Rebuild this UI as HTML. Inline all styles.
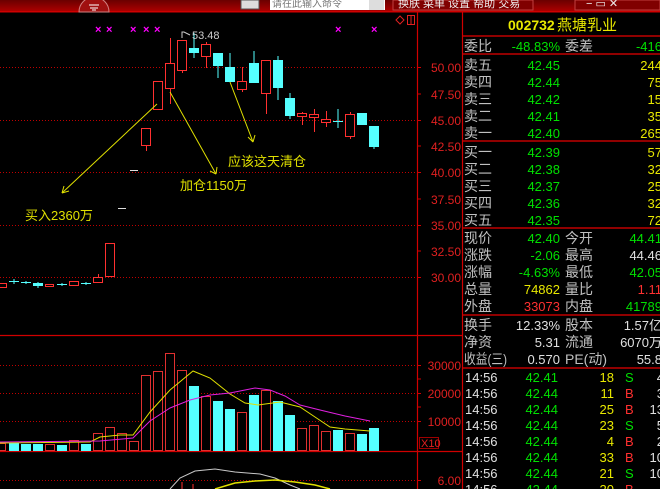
<!DOCTYPE html>
<html><head><meta charset="utf-8"><style>
html,body{margin:0;padding:0;background:#000;width:660px;height:489px;overflow:hidden}
svg{display:block}
text{font-family:"Liberation Sans","Noto Sans CJK SC",sans-serif}
.l{fill:#c0c0c0;font-size:14px}
.g{fill:#00e000;font-size:13px}
.y{fill:#e8e800;font-size:13px}
.r{fill:#ff3030;font-size:13px}
.w{fill:#e0e0e0;font-size:13px}
.ax{fill:#e02020;font-size:12px}
</style></head><body>
<svg width="660" height="489" viewBox="0 0 660 489" xmlns="http://www.w3.org/2000/svg">
<defs><linearGradient id="tb" x1="0" y1="0" x2="0" y2="1"><stop offset="0" stop-color="#6a0000"/><stop offset="1" stop-color="#b00000"/></linearGradient></defs>
<rect x="0" y="0" width="660" height="12" fill="url(#tb)"/>
<rect x="0" y="11" width="660" height="1.5" fill="#d00000"/>
<path d="M79 12 A15 15 0 0 1 109 12 Z" fill="#a01010" stroke="#d08080" stroke-width="1"/>
<path d="M89 5 h10 M90 8 h8 M92 10 h4" stroke="#fff" stroke-width="1"/>
<rect x="241" y="0" width="18" height="9" fill="#ddd" stroke="#555"/>
<rect x="270" y="0" width="115" height="10" fill="#fff"/>
<text x="272" y="7" font-size="10" fill="#777">请在此输入命令</text>
<rect x="369" y="0" width="15" height="10" fill="#ddd"/>
<rect x="393" y="0" width="140" height="10" fill="#800000" stroke="#c04040"/>
<text x="398" y="7" font-size="11" fill="#eee">换肤  菜单  设置  帮助  交易</text>
<rect x="575" y="0" width="85" height="10" fill="#800000" stroke="#c04040"/>
<text x="586" y="7" font-size="11" fill="#eee">−     ▭     ✕</text>

<g stroke="#c00000" stroke-width="1" stroke-dasharray="1,2">
<line x1="0" y1="67.5" x2="417" y2="67.5"/><line x1="0" y1="120.5" x2="417" y2="120.5"/>
<line x1="0" y1="172.5" x2="417" y2="172.5"/><line x1="0" y1="225.5" x2="417" y2="225.5"/>
<line x1="0" y1="277.5" x2="417" y2="277.5"/>
<line x1="0" y1="365.5" x2="417" y2="365.5"/><line x1="0" y1="393.5" x2="417" y2="393.5"/>
<line x1="0" y1="421.5" x2="417" y2="421.5"/><line x1="0" y1="480.5" x2="417" y2="480.5"/>
</g>
<g stroke="#d00000" stroke-width="1.2">
<line x1="417.5" y1="12" x2="417.5" y2="489"/>
<line x1="462.5" y1="12" x2="462.5" y2="489"/>
<line x1="0" y1="335.5" x2="462" y2="335.5"/>
<line x1="0" y1="451.5" x2="462" y2="451.5"/>
</g>
<g stroke="#d00000"><path d="M417 67.5h4M417 94h4M417 120.5h4M417 146h4M417 172.5h4M417 199h4M417 225.5h4M417 251h4M417 277.5h4M417 365.5h4M417 379h4M417 393.5h4M417 407h4M417 421.5h4M417 480.5h4"/></g>
<g class="ax" text-anchor="end">
<text x="461" y="72">50.00</text><text x="461" y="99">47.50</text><text x="461" y="125">45.00</text>
<text x="461" y="151">42.50</text><text x="461" y="177">40.00</text><text x="461" y="204">37.50</text>
<text x="461" y="230">35.00</text><text x="461" y="256">32.50</text><text x="461" y="282">30.00</text>
<text x="461" y="370">30000</text><text x="461" y="398">20000</text><text x="461" y="426">10000</text>
<text x="461" y="485">6.00</text>
</g>
<rect x="419.5" y="437.5" width="19" height="11" fill="none" stroke="#a00000"/>
<text x="421" y="447" font-size="11" fill="#e02020">X10</text>
<path d="M396 20 l4 -4 l4 4 l-4 4z" fill="none" stroke="#e02020"/>
<rect x="407.5" y="15.5" width="7" height="9" fill="none" stroke="#e02020"/><line x1="411" y1="16" x2="411" y2="24" stroke="#e02020"/>

<g fill="#ff00ff" font-size="11" font-weight="bold"><text x="95" y="33">×</text><text x="106" y="33">×</text><text x="130" y="33">×</text><text x="143" y="33">×</text><text x="154" y="33">×</text><text x="335" y="33">×</text><text x="371" y="33">×</text></g>

<g stroke="#ff3030" fill="#000" stroke-width="1">
<rect x="-1.5" y="283.5" width="8" height="4"/>
<rect x="45.5" y="284.5" width="8" height="2"/>
<rect x="69.5" y="281.5" width="9" height="4"/>
<line x1="98.5" y1="274" x2="98.5" y2="277"/><rect x="93.5" y="277.5" width="9" height="5"/>
<rect x="105.5" y="243.5" width="9" height="33"/>
<line x1="146.5" y1="146" x2="146.5" y2="151"/><rect x="141.5" y="128.5" width="9" height="17"/>
<rect x="153.5" y="81.5" width="9" height="28"/>
<line x1="170.5" y1="38" x2="170.5" y2="63"/><line x1="170.5" y1="88" x2="170.5" y2="104"/><rect x="165.5" y="63.5" width="9" height="25"/>
<line x1="182.5" y1="70" x2="182.5" y2="73"/><rect x="177.5" y="40.5" width="9" height="30"/>
<line x1="206.5" y1="42" x2="206.5" y2="44"/><line x1="206.5" y1="56" x2="206.5" y2="68"/><rect x="201.5" y="44.5" width="9" height="12"/>
<line x1="242.5" y1="67" x2="242.5" y2="92"/><rect x="237.5" y="81.5" width="9" height="8"/>
<line x1="266.5" y1="93" x2="266.5" y2="114"/><rect x="261.5" y="60.5" width="9" height="33"/>
<line x1="302.5" y1="112" x2="302.5" y2="125"/><rect x="297.5" y="113.5" width="9" height="3"/>
<line x1="314.5" y1="109" x2="314.5" y2="132"/><rect x="309.5" y="114.5" width="9" height="3"/>
<line x1="326.5" y1="111" x2="326.5" y2="127"/><rect x="321.5" y="119.5" width="9" height="3"/>
<line x1="350.5" y1="112" x2="350.5" y2="139"/><rect x="345.5" y="114.5" width="9" height="22"/>
</g>
<g fill="#55ffff" stroke="#55ffff" stroke-width="1">
<line x1="9" y1="281.5" x2="19" y2="281.5"/><line x1="14" y1="279" x2="14" y2="284"/>
<line x1="21" y1="282.5" x2="31" y2="282.5"/><line x1="26" y1="281" x2="26" y2="284"/>
<rect x="33.5" y="283.5" width="9" height="2"/><line x1="38" y1="282" x2="38" y2="288"/>
<line x1="57" y1="284.5" x2="67" y2="284.5"/><line x1="62" y1="283" x2="62" y2="286"/>
<line x1="81" y1="283.5" x2="91" y2="283.5"/><line x1="86" y1="282" x2="86" y2="285"/>
<line x1="194" y1="33" x2="194" y2="58"/><rect x="189.5" y="48.5" width="9" height="4"/>
<line x1="218" y1="65" x2="218" y2="78"/><rect x="213.5" y="53.5" width="9" height="12"/>
<line x1="230" y1="53" x2="230" y2="67"/><rect x="225.5" y="67.5" width="9" height="14"/>
<line x1="254" y1="51" x2="254" y2="63"/><rect x="249.5" y="63.5" width="9" height="19"/>
<line x1="278" y1="56" x2="278" y2="100"/><rect x="273.5" y="60.5" width="9" height="27"/>
<line x1="290" y1="93" x2="290" y2="119"/><rect x="285.5" y="98.5" width="9" height="17"/>
<line x1="338" y1="109" x2="338" y2="128"/><line x1="333" y1="121.5" x2="343" y2="121.5"/>
<rect x="357.5" y="113.5" width="9" height="11"/>
<line x1="374" y1="146" x2="374" y2="149"/><rect x="369.5" y="126.5" width="9" height="20"/>
</g>
<g stroke="#ddd"><line x1="118" y1="208.5" x2="126" y2="208.5"/><line x1="130" y1="170.5" x2="138" y2="170.5"/></g>
<path d="M182 38 v-6 h2 l6 3" fill="none" stroke="#ccc"/>
<text x="192" y="39" font-size="11" fill="#ccc">53.48</text>

<g stroke="#e0e000" stroke-width="1" fill="none">
<line x1="157" y1="104" x2="62" y2="193"/><path d="M62 193 l2 -7 M62 193 l7 -2"/>
<line x1="170" y1="92" x2="216" y2="174"/><path d="M216 174 l-6 -3 M216 174 l1 -7"/>
<line x1="230" y1="82" x2="253" y2="142"/><path d="M253 142 l-5 -5 M253 142 l2 -7"/>
</g>
<g fill="#e0e000" font-size="13">
<text x="228" y="166">应该这天清仓</text>
<text x="180" y="190">加仓1150万</text>
<text x="25" y="220">买入2360万</text>
</g>

<g fill="#000" stroke="#e03030">
<rect x="-1.5" y="443.5" width="7" height="7"/><rect x="45.5" y="444.5" width="9" height="6"/>
<rect x="69.5" y="440.5" width="9" height="10"/><rect x="93.5" y="433.5" width="9" height="17"/>
<rect x="105.5" y="427.5" width="9" height="23"/><rect x="117.5" y="433.5" width="9" height="17"/>
<rect x="129.5" y="441.5" width="9" height="9"/><rect x="141.5" y="375.5" width="9" height="75"/>
<rect x="153.5" y="371.5" width="9" height="79"/><rect x="165.5" y="353.5" width="9" height="97"/>
<rect x="177.5" y="370.5" width="9" height="80"/><rect x="201.5" y="396.5" width="9" height="54"/>
<rect x="237.5" y="412.5" width="9" height="38"/><rect x="261.5" y="390.5" width="9" height="60"/>
<rect x="297.5" y="428.5" width="9" height="22"/><rect x="309.5" y="425.5" width="9" height="25"/>
<rect x="321.5" y="431.5" width="9" height="19"/><rect x="345.5" y="433.5" width="9" height="17"/>
</g>
<g fill="#55ffff">
<rect x="9" y="443" width="10" height="8"/><rect x="21" y="444" width="10" height="7"/><rect x="33" y="444" width="10" height="7"/>
<rect x="57" y="445" width="10" height="6"/><rect x="81" y="444" width="10" height="7"/>
<rect x="189" y="386" width="10" height="65"/><rect x="213" y="401" width="10" height="50"/>
<rect x="225" y="409" width="10" height="42"/><rect x="249" y="395" width="10" height="56"/>
<rect x="273" y="401" width="10" height="50"/><rect x="285" y="415" width="10" height="36"/>
<rect x="333" y="430" width="10" height="21"/><rect x="357" y="434" width="10" height="17"/>
<rect x="369" y="428" width="10" height="23"/>
</g>
<polyline fill="none" stroke="#e0e000" points="0,443 90,442 100,437 120,435 133,435 150,412 170,390 193,371 210,378 230,394 245,403 258,405 280,402 300,407 315,417 330,427 345,429 370,431"/>
<polyline fill="none" stroke="#e020e0" points="0,442 100,441 133,438 150,421 170,408 190,400 210,395 230,393 245,390 255,388 270,390 285,396 300,405 320,410 345,416 370,421"/>
<polyline fill="none" stroke="#c8c8c8" points="170,489 180,478 195,471 215,469 235,472 260,474 275,478 290,485 300,489"/>
<polyline fill="none" stroke="#e0e000" stroke-width="1.5" points="215,489 235,483 255,481 275,480 295,482 315,485 330,489"/>
<g stroke="#ff3030"><line x1="182" y1="482" x2="182" y2="489"/><line x1="193" y1="484" x2="193" y2="489"/></g>

<g stroke="#c00000" stroke-width="1.5">
<line x1="463" y1="36" x2="660" y2="36"/><line x1="463" y1="54" x2="660" y2="54"/>
<line x1="463" y1="141" x2="660" y2="141"/><line x1="463" y1="228" x2="660" y2="228"/>
<line x1="463" y1="315" x2="660" y2="315"/><line x1="463" y1="368" x2="660" y2="368"/>
</g>
<text x="508" y="30" font-size="14" fill="#e8e800" font-weight="bold">002732</text>
<text x="557" y="30" font-size="15" fill="#e8e800">燕塘乳业</text>
<g class="l">
<text x="464" y="51">委比</text><text x="565" y="51">委差</text>
<text x="464" y="70">卖五</text><text x="464" y="87">卖四</text><text x="464" y="104">卖三</text><text x="464" y="121">卖二</text><text x="464" y="138">卖一</text>
<text x="464" y="157">买一</text><text x="464" y="174">买二</text><text x="464" y="191">买三</text><text x="464" y="208">买四</text><text x="464" y="225">买五</text>
<text x="464" y="243">现价</text><text x="565" y="243">今开</text>
<text x="464" y="260">涨跌</text><text x="565" y="260">最高</text>
<text x="464" y="277">涨幅</text><text x="565" y="277">最低</text>
<text x="464" y="294">总量</text><text x="565" y="294">量比</text>
<text x="464" y="311">外盘</text><text x="565" y="311">内盘</text>
<text x="464" y="330">换手</text><text x="565" y="330">股本</text>
<text x="464" y="347">净资</text><text x="565" y="347">流通</text>
<text x="464" y="364" textLength="43" lengthAdjust="spacingAndGlyphs">收益(三)</text><text x="565" y="364" textLength="42" lengthAdjust="spacingAndGlyphs">PE(动)</text>
</g>
<g text-anchor="end">
<text class="g" x="560" y="51">-48.83%</text><text class="g" x="662" y="51">-416</text>
<text class="g" x="560" y="70">42.45</text><text class="y" x="662" y="70">244</text>
<text class="g" x="560" y="87">42.44</text><text class="y" x="662" y="87">75</text>
<text class="g" x="560" y="104">42.42</text><text class="y" x="662" y="104">15</text>
<text class="g" x="560" y="121">42.41</text><text class="y" x="662" y="121">35</text>
<text class="g" x="560" y="138">42.40</text><text class="y" x="662" y="138">265</text>
<text class="g" x="560" y="157">42.39</text><text class="y" x="662" y="157">57</text>
<text class="g" x="560" y="174">42.38</text><text class="y" x="662" y="174">32</text>
<text class="g" x="560" y="191">42.37</text><text class="y" x="662" y="191">25</text>
<text class="g" x="560" y="208">42.36</text><text class="y" x="662" y="208">32</text>
<text class="g" x="560" y="225">42.35</text><text class="y" x="662" y="225">72</text>
<text class="g" x="560" y="243">42.40</text><text class="g" x="662" y="243">44.41</text>
<text class="g" x="560" y="260">-2.06</text><text class="w" x="662" y="260">44.46</text>
<text class="g" x="560" y="277">-4.63%</text><text class="g" x="662" y="277">42.05</text>
<text class="y" x="560" y="294">74862</text><text class="r" x="662" y="294">1.11</text>
<text class="r" x="560" y="311">33073</text><text class="g" x="662" y="311">41789</text>
<text class="w" x="560" y="330">12.33%</text><text class="w" x="662" y="330">1.57亿</text>
<text class="w" x="560" y="347">5.31</text><text class="w" x="662" y="347">6070万</text>
<text class="w" x="560" y="364">0.570</text><text class="w" x="662" y="364">55.8</text>
</g>
<g>
<text class="w" x="465" y="382">14:56</text><text class="w" x="465" y="398">14:56</text><text class="w" x="465" y="414">14:56</text><text class="w" x="465" y="430">14:56</text><text class="w" x="465" y="446">14:56</text><text class="w" x="465" y="462">14:56</text><text class="w" x="465" y="478">14:56</text><text class="w" x="465" y="494">14:56</text>
</g>
<g text-anchor="end">
<text class="g" x="558" y="382">42.41</text><text class="g" x="558" y="398">42.44</text><text class="g" x="558" y="414">42.44</text><text class="g" x="558" y="430">42.44</text><text class="g" x="558" y="446">42.44</text><text class="g" x="558" y="462">42.44</text><text class="g" x="558" y="478">42.44</text><text class="g" x="558" y="494">42.44</text>
<text class="y" x="614" y="382">18</text><text class="y" x="614" y="398">11</text><text class="y" x="614" y="414">25</text><text class="y" x="614" y="430">23</text><text class="y" x="614" y="446">4</text><text class="y" x="614" y="462">33</text><text class="y" x="614" y="478">21</text><text class="y" x="614" y="494">20</text>
<text class="w" x="664" y="382">4</text><text class="w" x="664" y="398">3</text><text class="w" x="664" y="414">13</text><text class="w" x="664" y="430">5</text><text class="w" x="664" y="446">2</text><text class="w" x="664" y="462">10</text><text class="w" x="664" y="478">10</text>
</g>
<g>
<text class="g" x="625" y="382">S</text><text class="r" x="625" y="398">B</text><text class="r" x="625" y="414">B</text><text class="g" x="625" y="430">S</text><text class="r" x="625" y="446">B</text><text class="r" x="625" y="462">B</text><text class="g" x="625" y="478">S</text><text class="r" x="625" y="494">B</text>
</g>
</svg>
</body></html>
